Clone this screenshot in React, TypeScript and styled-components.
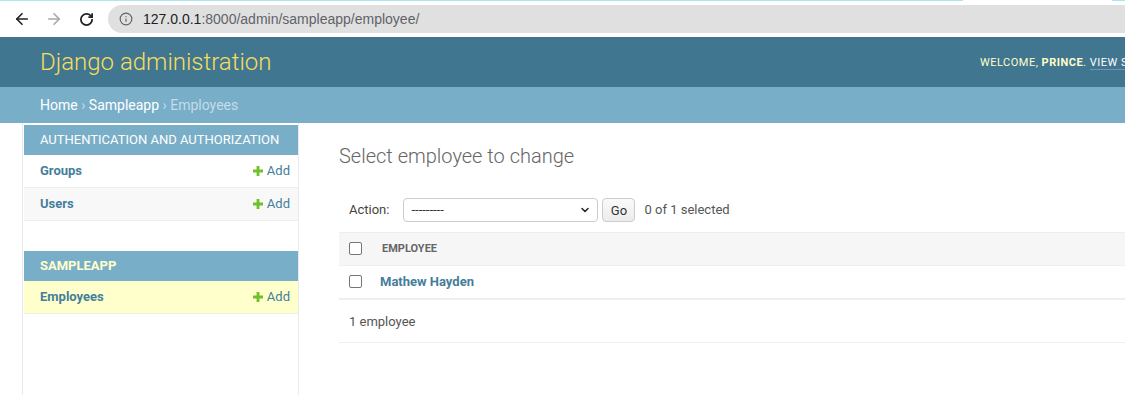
import React from "react";
import styled, { createGlobalStyle } from "styled-components";
import { ArrowLeft, ArrowRight, RotateCw, Info, ChevronDown } from "lucide-react";

const GlobalStyle = createGlobalStyle`
  html, body {
    margin: 0;
    padding: 0;
    background: #fff;
    overflow: hidden;
  }
  body {
    font-family: Roboto, "Liberation Sans", Arial, sans-serif;
    color: #333;
  }
  * {
    box-sizing: border-box;
  }
`;

const Page = styled.div`
  width: 1400px;
  height: 100vh;
  display: flex;
  flex-direction: column;
`;

/* browser chrome */

const BrowserBar = styled.div`
  height: 37px;
  flex: none;
  display: flex;
  align-items: center;
  padding: 1px 0 0 12px;
  background: linear-gradient(#aee5f4, #aee5f4) 0 0 / 963px 1px no-repeat,
    linear-gradient(#aee5f4, #aee5f4) 1112px 0 / 20px 1px no-repeat, #fff;
`;

const NavButton = styled.span<{ $muted?: boolean }>`
  width: 20px;
  height: 20px;
  margin-right: 12px;
  display: flex;
  align-items: center;
  justify-content: center;
  color: ${(p) => (p.$muted ? "#a8a8a8" : "#202124")};
`;

const Omnibox = styled.div`
  flex: 1;
  height: 28px;
  border-radius: 14px;
  background: #e0e0e0;
  display: flex;
  align-items: center;
  gap: 10px;
  padding-left: 11px;
  color: #5f6368;
`;

const Url = styled.span`
  font-family: "Liberation Sans", Arial, sans-serif;
  font-size: 14px;
  color: #5f6368;
`;

const Host = styled.span`
  color: #202124;
`;

/* django header */

const Header = styled.header`
  height: 50px;
  flex: none;
  background: #417690;
  display: flex;
  align-items: center;
  padding-left: 40px;
`;

const Branding = styled.div`
  flex: 0 0 940px;
`;

const SiteName = styled.h1`
  margin: 0;
  font-size: 24px;
  font-weight: 300;
  color: #f5dd5d;
`;

const UserTools = styled.div`
  font-size: 11px;
  letter-spacing: 0.5px;
  text-transform: uppercase;
  color: #ffc;
  white-space: nowrap;
`;

const UserLink = styled.a`
  color: #fff;
  text-decoration: none;
  border-bottom: 1px solid rgba(255, 255, 255, 0.25);
`;

const Breadcrumbs = styled.div`
  height: 36px;
  flex: none;
  background: #79aec8;
  color: #c4dce8;
  font-size: 14px;
  display: flex;
  align-items: center;
  padding: 0 40px;
  white-space: pre;
`;

const CrumbLink = styled.a`
  color: #fff;
  text-decoration: none;
`;

/* body */

const Body = styled.div`
  flex: 1;
  display: flex;
  min-height: 0;
`;

const Toggle = styled.div`
  width: 23px;
  flex: none;
  border-right: 1px solid #eaeaea;
`;

const Sidebar = styled.nav`
  width: 276px;
  flex: none;
  border-right: 1px solid #eaeaea;
  padding: 2px 0 0 1px;
`;

const Module = styled.div`
  margin-bottom: 30px;
`;

const Caption = styled.div<{ $current?: boolean }>`
  background: #79aec8;
  color: ${(p) => (p.$current ? "#ffc" : "#fff")};
  font-weight: ${(p) => (p.$current ? 700 : 400)};
  font-size: 13px;
  line-height: 14px;
  letter-spacing: 0;
  text-transform: uppercase;
  white-space: nowrap;
  padding: 8px 16px;
`;

const ModelRow = styled.div<{ $bg: string }>`
  display: flex;
  align-items: center;
  justify-content: space-between;
  padding: 8px 8px 8px 16px;
  border-bottom: 1px solid #eee;
  background: ${(p) => p.$bg};
  font-size: 13px;
  line-height: 16px;
`;

const ModelName = styled.a`
  color: #447e9b;
  font-weight: 700;
  text-decoration: none;
`;

const AddLink = styled.a`
  display: flex;
  align-items: center;
  gap: 4px;
  color: #447e9b;
  text-decoration: none;
`;

const Content = styled.main`
  flex: 1;
  padding: 21px 40px 20px;
`;

const Title = styled.h1`
  margin: 0 0 20px;
  font-size: 20px;
  line-height: 24px;
  font-weight: 300;
  color: #666;
`;

const Actions = styled.div`
  display: flex;
  align-items: center;
  padding: 10px;
  font-size: 13px;
  line-height: 24px;
  color: #555;
`;

const ActionLabel = styled.label`
  margin-right: 14px;
  color: #444;
`;

const Select = styled.div`
  width: 195px;
  height: 24px;
  border: 1px solid #ccc;
  border-radius: 4px;
  background: #fff;
  display: flex;
  align-items: center;
  justify-content: space-between;
  padding: 0 6px 0 7px;
  color: #333;
  font-size: 13px;
`;

const GoButton = styled.button`
  margin-left: 4px;
  height: 24px;
  width: 33px;
  border: 1px solid #ccc;
  border-radius: 4px;
  background: linear-gradient(#fafafa, #ececec);
  font-family: inherit;
  font-size: 13px;
  color: #333;
  padding: 0;
`;

const Counter = styled.span`
  margin-left: 9px;
  color: #555;
`;

const Table = styled.table`
  width: 100%;
  border-collapse: collapse;
`;

const HeadCell = styled.th<{ $narrow?: boolean }>`
  background: #f6f6f6;
  border-top: 1px solid #eee;
  border-bottom: 1px solid #eee;
  padding: 8px 10px;
  line-height: 16px;
  text-align: left;
  font-size: 11px;
  font-weight: 700;
  color: #666;
  text-transform: uppercase;
  width: ${(p) => (p.$narrow ? "33px" : "auto")};
  vertical-align: middle;
`;

const Cell = styled.td<{ $narrow?: boolean }>`
  border-bottom: 1px solid #eee;
  padding: ${(p) => (p.$narrow ? "8px 10px" : "8px")};
  line-height: 16px;
  font-size: 13px;
  vertical-align: middle;
`;

const Checkbox = styled.span`
  display: block;
  width: 13px;
  height: 13px;
  margin-top: -1px;
  border: 1px solid #767676;
  border-radius: 2px;
  background: #fff;
`;

const RowLink = styled.a`
  color: #447e9b;
  font-weight: 700;
  text-decoration: none;
`;

const Paginator = styled.p`
  margin: 0;
  border-top: 1px solid #eee;
  border-bottom: 1px solid #eee;
  padding: 11px 10px 9px;
  line-height: 22px;
  font-size: 13px;
  color: #555;
`;

const PlusIcon = () => (
  <svg width="10" height="10" viewBox="0 0 10 10">
    <path
      d="M3.6 0h2.8v3.6H10v2.8H6.4V10H3.6V6.4H0V3.6h3.6z"
      fill="#70bf2b"
    />
  </svg>
);

type Model = { name: string; bg: string };

const apps: { name: string; current?: boolean; models: Model[] }[] = [
  {
    name: "Authentication and Authorization",
    models: [
      { name: "Groups", bg: "#fff" },
      { name: "Users", bg: "#f8f8f8" },
    ],
  },
  {
    name: "Sampleapp",
    current: true,
    models: [{ name: "Employees", bg: "#ffc" }],
  },
];

export default function App() {
  return (
    <Page>
      <GlobalStyle />

      <BrowserBar>
        <NavButton>
          <ArrowLeft size={18} strokeWidth={2.2} />
        </NavButton>
        <NavButton $muted>
          <ArrowRight size={18} strokeWidth={2.2} />
        </NavButton>
        <NavButton>
          <RotateCw size={15} strokeWidth={2.8} />
        </NavButton>
        <Omnibox>
          <Info size={14} strokeWidth={2} />
          <Url>
            <Host>127.0.0.1</Host>:8000/admin/sampleapp/employee/
          </Url>
        </Omnibox>
      </BrowserBar>

      <Header>
        <Branding>
          <SiteName>Django administration</SiteName>
        </Branding>
        <UserTools>
          Welcome, <strong>Prince</strong>. <UserLink>View site</UserLink> /{" "}
          <UserLink>Change password</UserLink> / <UserLink>Log out</UserLink>
        </UserTools>
      </Header>

      <Breadcrumbs>
        <CrumbLink>Home</CrumbLink> › <CrumbLink>Sampleapp</CrumbLink> ›
        Employees
      </Breadcrumbs>

      <Body>
        <Toggle />
        <Sidebar>
          {apps.map((app) => (
            <Module key={app.name}>
              <Caption $current={app.current}>{app.name}</Caption>
              {app.models.map((m) => (
                <ModelRow key={m.name} $bg={m.bg}>
                  <ModelName>{m.name}</ModelName>
                  <AddLink>
                    <PlusIcon />
                    Add
                  </AddLink>
                </ModelRow>
              ))}
            </Module>
          ))}
        </Sidebar>

        <Content>
          <Title>Select employee to change</Title>

          <Actions>
            <ActionLabel>Action:</ActionLabel>
            <Select>
              <span>---------</span>
              <ChevronDown size={12} strokeWidth={3} color="#222" />
            </Select>
            <GoButton>Go</GoButton>
            <Counter>0 of 1 selected</Counter>
          </Actions>

          <Table>
            <thead>
              <tr>
                <HeadCell $narrow>
                  <Checkbox />
                </HeadCell>
                <HeadCell>Employee</HeadCell>
              </tr>
            </thead>
            <tbody>
              <tr>
                <Cell $narrow>
                  <Checkbox />
                </Cell>
                <Cell>
                  <RowLink>Mathew Hayden</RowLink>
                </Cell>
              </tr>
            </tbody>
          </Table>

          <Paginator>1 employee</Paginator>
        </Content>
      </Body>
    </Page>
  );
}
